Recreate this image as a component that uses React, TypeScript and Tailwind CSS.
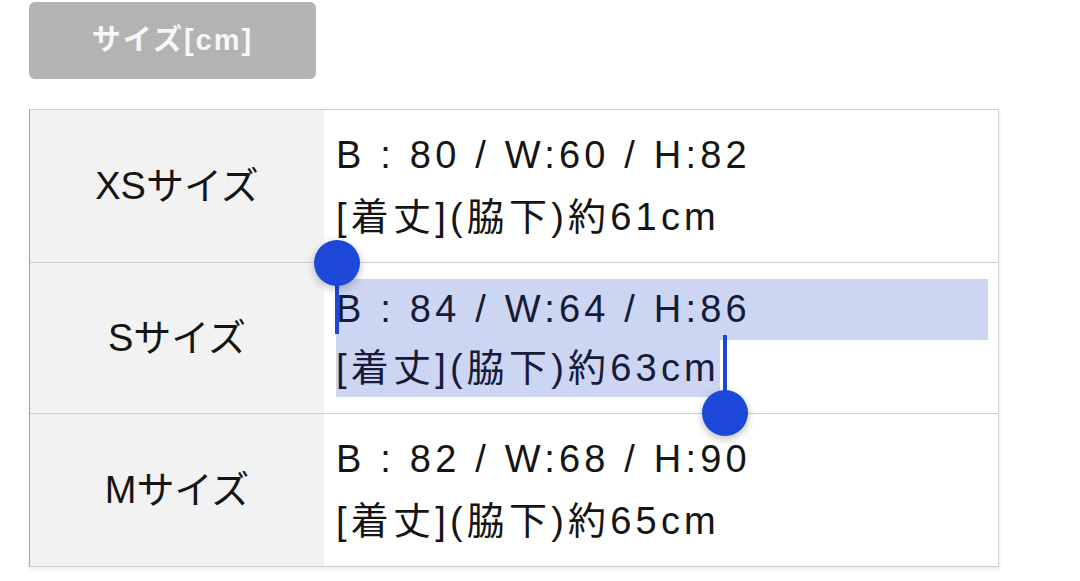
import React from 'react';

const font = { fontFamily: '"Liberation Sans", "Noto Sans CJK JP", sans-serif' };

type Row = { label: string; bwh: string; length: string };

const rows: Row[] = [
  { label: 'XSサイズ', bwh: 'B : 80 / W:60 / H:82', length: '[着丈](脇下)約61cm' },
  { label: 'Sサイズ', bwh: 'B : 84 / W:64 / H:86', length: '[着丈](脇下)約63cm' },
  { label: 'Mサイズ', bwh: 'B : 82 / W:68 / H:90', length: '[着丈](脇下)約65cm' },
];

function Handle({ className }: { className: string }) {
  return (
    <div className={`absolute w-[46px] h-[46px] rounded-full bg-[#1c47d8] shadow-[0_3px_8px_rgba(0,0,0,0.25)] ${className}`} />
  );
}

export default function App() {
  return (
    <div className="relative w-[1080px] h-[581px] bg-white overflow-hidden pl-[29px] pt-[2px]" style={font}>
      <div className="w-[287px] h-[77px] rounded-[6px] bg-[#b3b3b3] flex items-center justify-center">
        <span className="text-[29px] font-bold text-[#f7f7f7] tracking-[2px]">サイズ[cm]</span>
      </div>

      <div className="mt-[30px] w-[970px] border border-[#cfcfcf] border-l-[#a8a8a8] shadow-[0_2px_4px_rgba(0,0,0,0.08)]">
        {rows.map((row, i) => {
          const selected = i === 1;
          const h = i === 0 ? 'h-[152px]' : i === 1 ? 'h-[151px]' : 'h-[153px]';
          return (
            <div key={row.label} className={`flex ${h} ${i > 0 ? 'border-t border-[#cfcfcf]' : ''}`}>
              <div className="w-[294px] shrink-0 bg-[#f2f2f2] flex items-center justify-center">
                <span className="text-[38px] text-[#151515]">{row.label}</span>
              </div>
              <div className="flex-1 bg-white flex flex-col justify-center pl-[12px] pr-[10px] text-[38px] tracking-[4.2px] text-[#151515]">
                {selected ? (
                  <>
                    <div className="h-[61px] leading-[61px] bg-[#ccd5f2] text-[#161b38]">{row.bwh}</div>
                    <div>
                      <span className="inline-block h-[57px] leading-[57px] bg-[#ccd5f2] text-[#161b38]">{row.length}</span>
                    </div>
                  </>
                ) : (
                  <>
                    <div className="h-[62px] leading-[62px]">{row.bwh}</div>
                    <div className="h-[62px] leading-[62px]">{row.length}</div>
                  </>
                )}
              </div>
            </div>
          );
        })}
      </div>

      {/* selection handles */}
      <div className="absolute left-[335px] top-[262px] w-[4px] h-[72px] bg-[#1c47d8]" />
      <Handle className="left-[314px] top-[240px]" />
      <div className="absolute left-[723px] top-[335px] w-[4px] h-[70px] bg-[#1c47d8]" />
      <Handle className="left-[702px] top-[390px]" />
    </div>
  );
}
